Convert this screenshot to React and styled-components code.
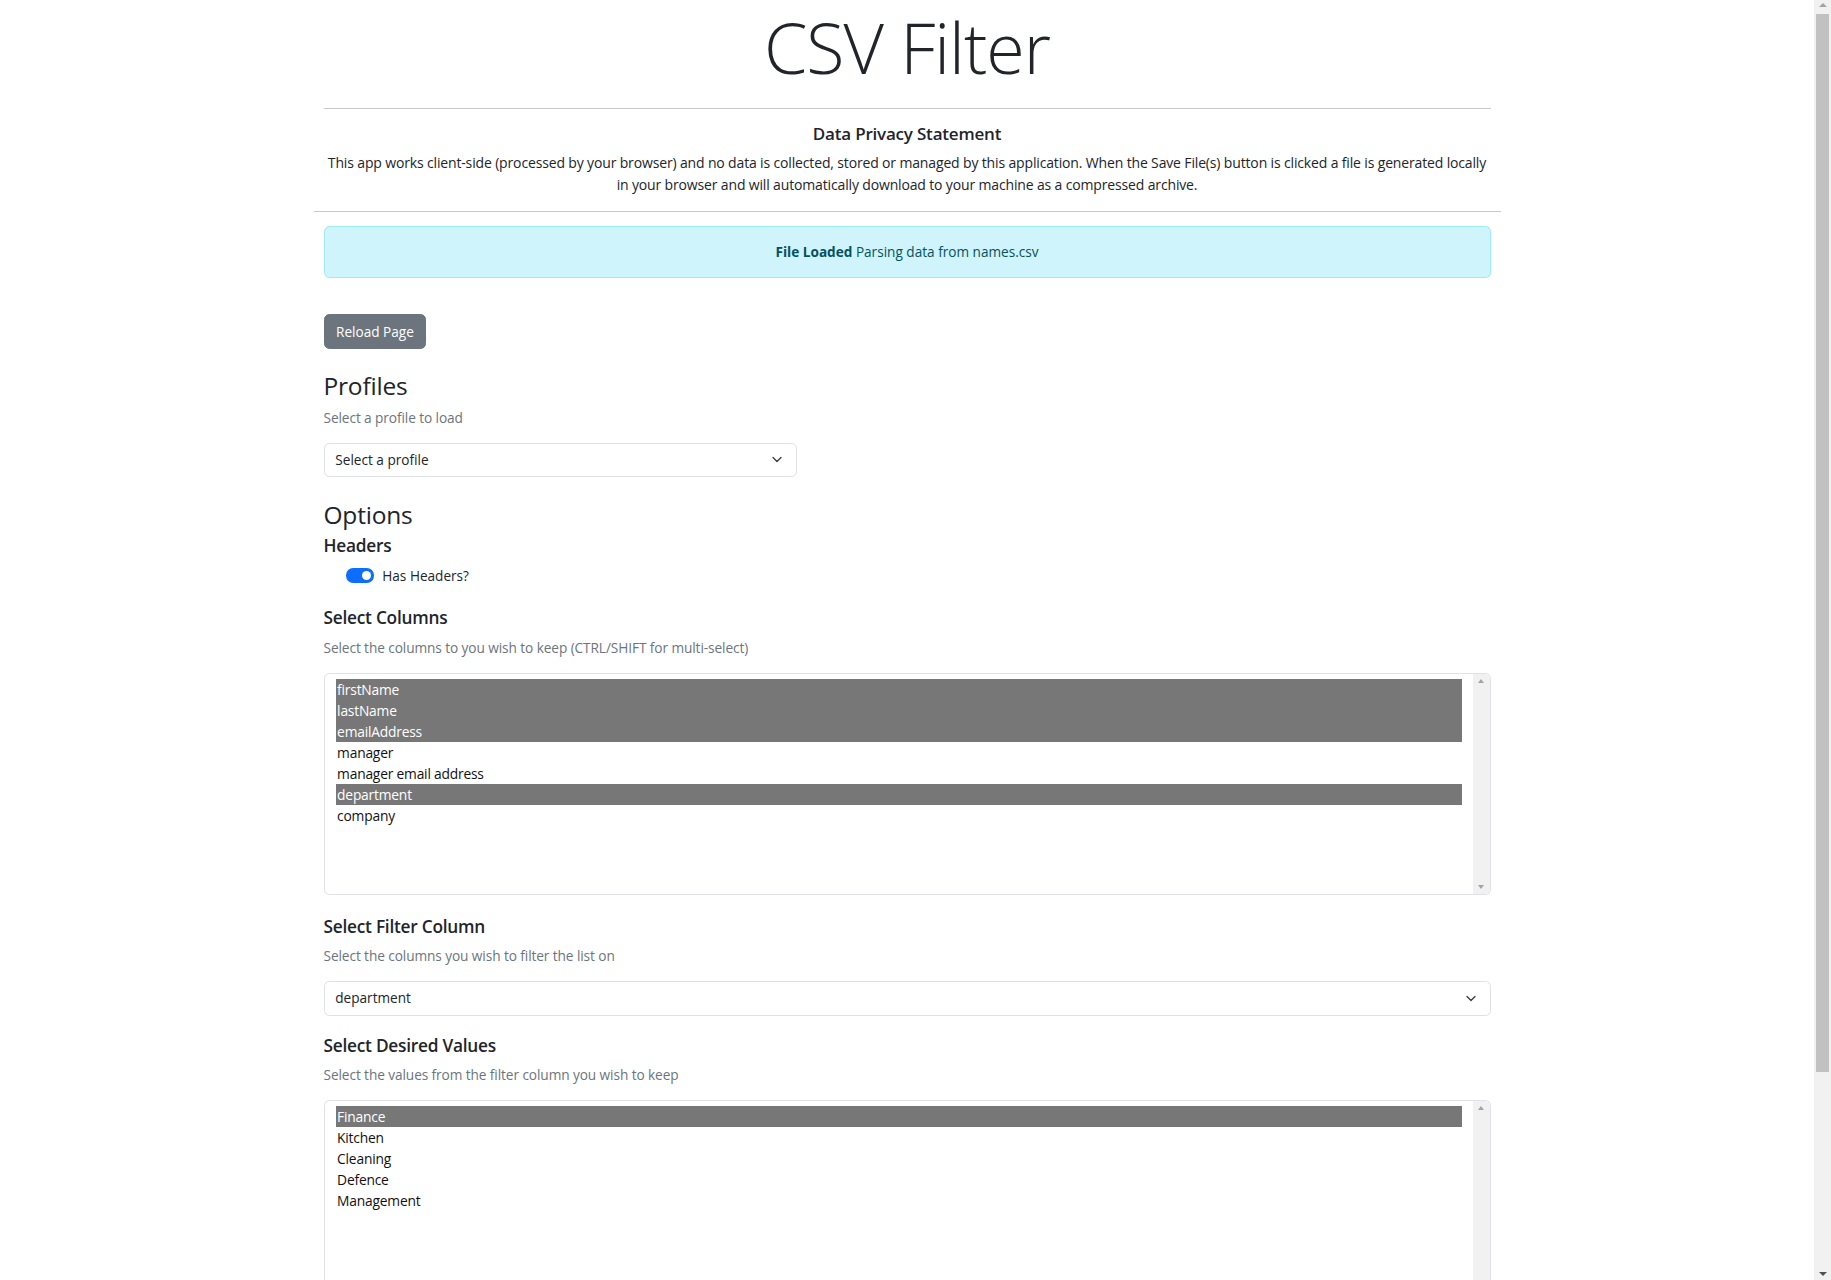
import React from "react";
import styled, { createGlobalStyle } from "styled-components";

const GlobalStyle = createGlobalStyle`
  html, body {
    margin: 0;
    padding: 0;
    background: #fff;
  }
  body {
    padding-right: 17px;
    font-family: "Open Sans", "Noto Sans", sans-serif;
    font-size: 14.4px;
    line-height: 1.5;
    color: #212529;
  }
  * {
    box-sizing: border-box;
  }
`;

/* browser scrollbar drawn over the right edge, as in the screenshot */
const PageScrollbar = styled.div`
  position: fixed;
  top: 0;
  right: 0;
  bottom: 0;
  width: 17px;
  display: flex;
  flex-direction: column;
  align-items: center;
  background: #f1f1f1;
`;

const PageThumb = styled.div`
  width: 13px;
  height: 1058px;
  margin-top: 7px;
  background: #c1c1c1;
`;

const PageArrow = styled.span`
  margin-top: ${(p) => (p.$down ? "auto" : "3px")};
  margin-bottom: ${(p) => (p.$down ? "4px" : "0")};
  width: 0;
  height: 0;
  border-left: 4px solid transparent;
  border-right: 4px solid transparent;
  ${(p) =>
    p.$down
      ? "border-top: 4px solid #505050;"
      : "border-bottom: 4px solid #a3a3a3;"}
`;

const Container = styled.div`
  width: 1187px;
  margin: 0 auto;
  padding-bottom: 190px;
`;

const Inner = styled.div`
  padding: 0 10px;
`;

const Title = styled.h1`
  margin: 0;
  font-size: 70px;
  font-weight: 300;
  line-height: 1.362;
  text-align: center;
  letter-spacing: -1px;
`;

const Rule = styled.hr`
  margin: ${(p) => p.$mt || 0}px 0 0;
  border: 0;
  border-top: 1px solid #c8c9ca;
`;

const Privacy = styled.section`
  text-align: center;
`;

const PrivacyHeading = styled.h5`
  margin: 15.4px 0 0;
  font-size: 17px;
  font-weight: 600;
  line-height: 1.2;
  letter-spacing: -0.2px;
`;

const PrivacyText = styled.p`
  margin: 7px 0 0;
  font-size: 14px;
  line-height: 22px;
  letter-spacing: -0.15px;
`;

const Alert = styled.div`
  margin-top: 14px;
  padding: 14.4px;
  border: 1px solid #9eeaf9;
  border-radius: 5.4px;
  background: #cff4fc;
  color: #055160;
  font-size: 13.6px;
  line-height: 21.6px;
  text-align: center;
  b {
    font-weight: 700;
  }
`;

const Button = styled.button`
  display: inline-block;
  margin-top: 35.5px;
  padding: 6px 11.5px;
  border: 1px solid #6c757d;
  border-radius: 5.4px;
  background: #6c757d;
  color: #fff;
  font-family: inherit;
  font-size: 13.6px;
  line-height: 21px;
  cursor: pointer;
`;

const SectionTitle = styled.h3`
  margin: ${(p) => p.$mt}px 0 0;
  font-size: 24.5px;
  font-weight: 500;
  line-height: 30px;
  letter-spacing: -0.2px;
`;

const SubTitle = styled.h5`
  margin: ${(p) => p.$mt}px 0 0;
  font-size: 17.3px;
  font-weight: 550;
  line-height: 21.6px;
  letter-spacing: -0.25px;
`;

const Hint = styled.div`
  margin-top: ${(p) => p.$mt || 10}px;
  color: #6c757d;
  font-size: 13.7px;
  line-height: 18.9px;
  letter-spacing: -0.1px;
`;

const SelectBox = styled.div`
  display: flex;
  align-items: center;
  justify-content: space-between;
  width: ${(p) => p.$width || "100%"};
  height: 34.4px;
  margin-top: ${(p) => p.$mt || 15}px;
  padding: 0 14px 0 10.8px;
  border: 1px solid #dee2e6;
  border-radius: 5.4px;
  background: #fff;
  font-size: 13.6px;
  color: #212529;
`;

const Chevron = () => (
  <svg width="10" height="7" viewBox="0 0 10 7" fill="none">
    <path
      d="M1 1.5l4 4 4-4"
      stroke="#343a40"
      strokeWidth="1.3"
      strokeLinecap="round"
      strokeLinejoin="round"
    />
  </svg>
);

const SwitchRow = styled.label`
  display: flex;
  align-items: center;
  gap: 8px;
  margin-top: 8px;
  padding-left: 22px;
  font-size: 13.6px;
  line-height: 21.6px;
`;

const Switch = styled.span`
  position: relative;
  width: 28.8px;
  height: 14.4px;
  border-radius: 7.2px;
  background: #0d6efd;
  &::after {
    content: "";
    position: absolute;
    top: 2.6px;
    right: 3px;
    width: 9.2px;
    height: 9.2px;
    border-radius: 50%;
    background: #fff;
  }
`;

const ListBox = styled.div`
  display: flex;
  height: ${(p) => p.$height}px;
  margin-top: 15px;
  border: 1px solid #dee2e6;
  border-radius: 5.4px;
  overflow: hidden;
  background: #fff;
`;

const Options = styled.div`
  flex: 1;
  padding: 5px 10.8px 5px 11.6px;
`;

const Option = styled.div`
  height: 21px;
  padding-left: 1px;
  font-size: 13.8px;
  line-height: 21px;
  letter-spacing: -0.2px;
  white-space: nowrap;
  background: ${(p) => (p.$selected ? "#777" : "transparent")};
  color: ${(p) => (p.$selected ? "#fff" : "#111")};
`;

const ScrollTrack = styled.div`
  display: flex;
  flex-direction: column;
  justify-content: space-between;
  align-items: center;
  width: 17px;
  padding: 5px 0;
  background: #f1f1f1;
`;

const Arrow = styled.span`
  width: 0;
  height: 0;
  border-left: 3.5px solid transparent;
  border-right: 3.5px solid transparent;
  ${(p) =>
    p.$down
      ? "border-top: 4px solid #a3a3a3;"
      : "border-bottom: 4px solid #a3a3a3;"}
`;

function MultiSelect({ items, height }) {
  return (
    <ListBox $height={height}>
      <Options>
        {items.map((it) => (
          <Option key={it.label} $selected={it.selected}>
            {it.label}
          </Option>
        ))}
      </Options>
      <ScrollTrack>
        <Arrow />
        <Arrow $down />
      </ScrollTrack>
    </ListBox>
  );
}

const columns = [
  { label: "firstName", selected: true },
  { label: "lastName", selected: true },
  { label: "emailAddress", selected: true },
  { label: "manager" },
  { label: "manager email address" },
  { label: "department", selected: true },
  { label: "company" },
];

const values = [
  { label: "Finance", selected: true },
  { label: "Kitchen" },
  { label: "Cleaning" },
  { label: "Defence" },
  { label: "Management" },
];

export default function App() {
  return (
    <>
      <GlobalStyle />
      <Container>
        <Inner>
          <Title>CSV Filter</Title>
          <Rule $mt={12.7} />
          <Privacy>
            <PrivacyHeading>Data Privacy Statement</PrivacyHeading>
            <PrivacyText>
              This app works client-side (processed by your browser) and no
              data is collected, stored or managed by this application. When
              the Save File(s) button is clicked a file is generated locally in
              your browser and will automatically download to your machine as a
              compressed archive.
            </PrivacyText>
          </Privacy>
        </Inner>
        <Rule $mt={15} />
        <Inner>
          <Alert>
            <b>File Loaded</b> Parsing data from names.csv
          </Alert>
          <Button type="button">Reload Page</Button>

          <SectionTitle $mt={22}>Profiles</SectionTitle>
          <Hint $mt={8}>Select a profile to load</Hint>
          <SelectBox $width="473px">
            <span>Select a profile</span>
            <Chevron />
          </SelectBox>

          <SectionTitle $mt={23}>Options</SectionTitle>
          <SubTitle $mt={5}>Headers</SubTitle>
          <SwitchRow>
            <Switch />
            Has Headers?
          </SwitchRow>

          <SubTitle $mt={21}>Select Columns</SubTitle>
          <Hint>
            Select the columns to you wish to keep (CTRL/SHIFT for
            multi-select)
          </Hint>
          <MultiSelect items={columns} height={222} />

          <SubTitle $mt={21}>Select Filter Column</SubTitle>
          <Hint>Select the columns you wish to filter the list on</Hint>
          <SelectBox>
            <span>department</span>
            <Chevron />
          </SelectBox>

          <SubTitle $mt={19}>Select Desired Values</SubTitle>
          <Hint>Select the values from the filter column you wish to keep</Hint>
          <MultiSelect items={values} height={222} />
        </Inner>
      </Container>
      <PageScrollbar>
        <PageArrow />
        <PageThumb />
        <PageArrow $down />
      </PageScrollbar>
    </>
  );
}
